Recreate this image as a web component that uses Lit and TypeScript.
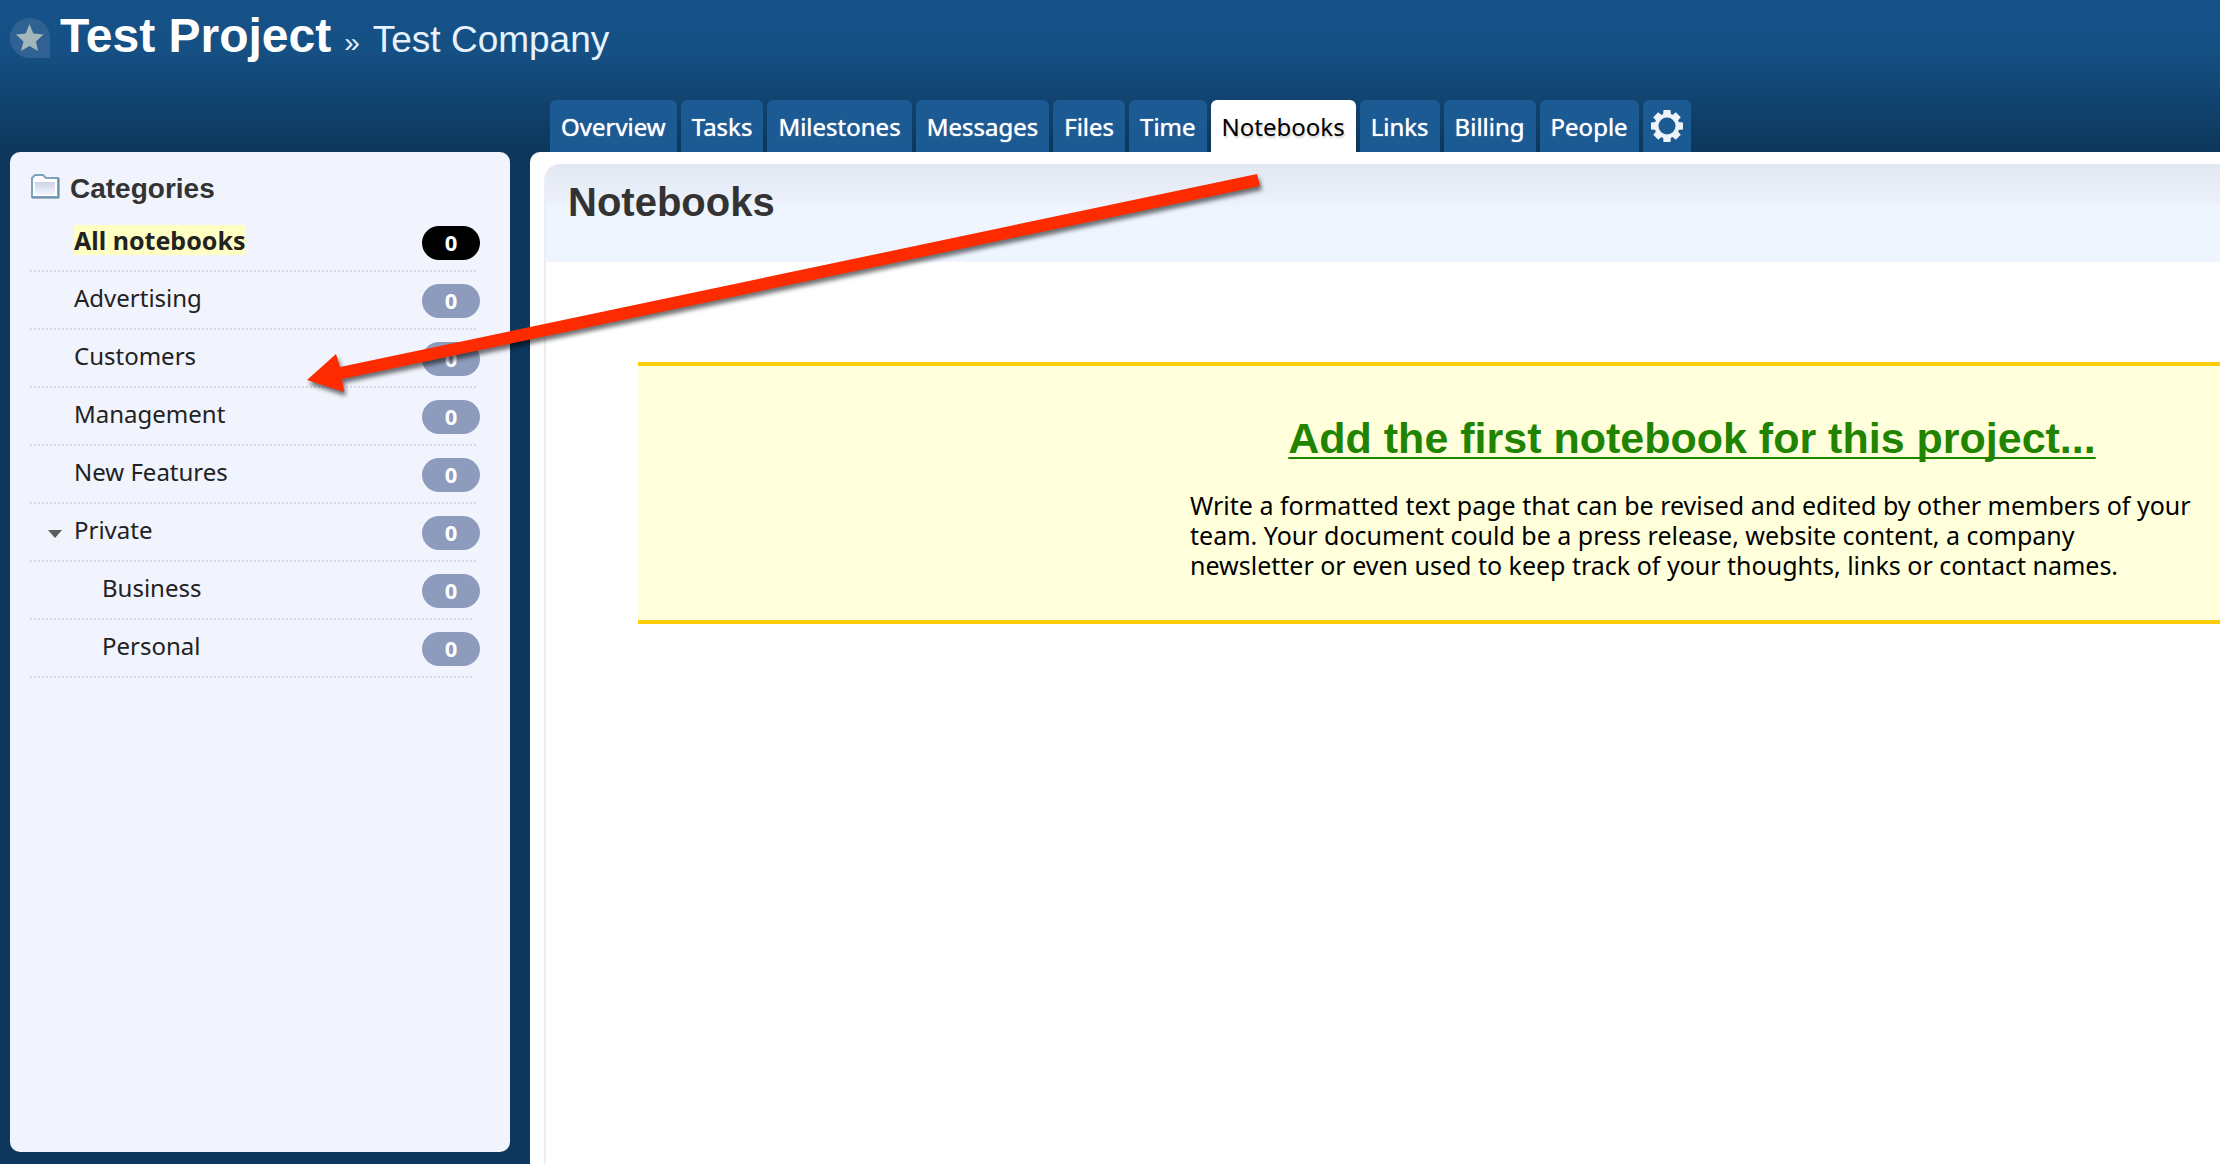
import { LitElement, html, css, svg, nothing } from "lit";
import { customElement, property } from "lit/decorators.js";
import { classMap } from "lit/directives/class-map.js";

interface Category {
  name: string;
  count: number;
  selected?: boolean;
  expanded?: boolean;
  nested?: boolean;
}

const TABS = [
  "Overview",
  "Tasks",
  "Milestones",
  "Messages",
  "Files",
  "Time",
  "Notebooks",
  "Links",
  "Billing",
  "People",
];

const CATEGORIES: Category[] = [
  { name: "All notebooks", count: 0, selected: true },
  { name: "Advertising", count: 0 },
  { name: "Customers", count: 0 },
  { name: "Management", count: 0 },
  { name: "New Features", count: 0 },
  { name: "Private", count: 0, expanded: true },
  { name: "Business", count: 0, nested: true },
  { name: "Personal", count: 0, nested: true },
];

@customElement("project-header")
class ProjectHeader extends LitElement {
  static styles = css`
    :host {
      display: block;
      color: #fff;
    }
    .title {
      display: flex;
      align-items: baseline;
      height: 100px;
      padding-left: 10px;
      box-sizing: border-box;
      font-family: "Liberation Sans", Arial, sans-serif;
    }
    .star {
      align-self: flex-start;
      width: 40px;
      height: 40px;
      margin: 18px 10px 0 0;
      padding: 0;
      border: 0;
      background: none;
    }
    .star svg {
      display: block;
    }
    h1 {
      margin: 8px 0 0;
      font-size: 48px;
      line-height: 56px;
    }
    .separator {
      margin: 0 13px;
      font-size: 28px;
      color: #e6f2ff;
    }
    .company {
      font-size: 37px;
      color: #e6f2ff;
      text-decoration: none;
    }
    .tabs {
      display: flex;
      gap: 4px;
      padding-left: 550px;
      font: 24px/54px "Noto Sans", "Open Sans", sans-serif;
    }
    .tab {
      height: 52px;
      padding: 0 11px;
      border-radius: 6px 6px 0 0;
      background: #1c5a94;
      color: #fff;
      text-decoration: none;
      text-shadow: 0 0 1px #fff;
    }
    .tab.current {
      background: #fff;
      color: #000;
      text-shadow: 1px 2px 2px #ccc;
    }
    .settings {
      display: flex;
      justify-content: center;
      width: 48px;
      padding: 10px 0 0;
      border: 0;
      box-sizing: border-box;
    }
  `;

  render() {
    return html`
      <div class="title">
        <button class="star" aria-label="Star project">
          <svg width="40" height="40" viewBox="0 0 40 40">
            <path d="M20 0A20 20 0 0 1 40 20V40H20A20 20 0 0 1 20 0Z" fill="#2f6292" />
            <path
              d="M19.500 6L23.300 15.500L33.500 16.500L26 23.500L28 33L19.500 28L11 33L13.500 23.500L6 16.500L15.700 15.500Z"
              fill="#a3b6bb"
            />
          </svg>
        </button>
        <h1>Test Project</h1>
        <span class="separator">»</span>
        <a class="company" href="#company">Test Company</a>
      </div>
      <nav class="tabs">
        ${TABS.map(
          (t) => html`<a
            class=${classMap({ tab: true, current: t === "Notebooks" })}
            href="#${t.toLowerCase()}"
            >${t}</a
          >`
        )}
        <button class="tab settings" aria-label="Settings">
          <svg width="32" height="32" viewBox="-16 -16 32 32" fill="#eef3f8">
            ${[0, 45, 90, 135, 180, 225, 270, 315].map(
              (a) => svg`<path d="M-4 -10L-3.500 -16H3.500L4 -10Z" transform="rotate(${a})" />`
            )}
            <circle r="10.500" fill="none" stroke="#eef3f8" stroke-width="4" />
          </svg>
        </button>
      </nav>
    `;
  }
}

@customElement("category-row")
class CategoryRow extends LitElement {
  static styles = css`
    :host {
      display: block;
    }
    .row {
      display: flex;
      align-items: flex-start;
      height: 58px;
      margin: 0 34px 0 20px;
      padding: 11px 0 0 44px;
      box-sizing: border-box;
      border-bottom: 2px dotted #d5d9e2;
      font: 24px/30px "Noto Sans", "Open Sans", sans-serif;
      color: #222;
    }
    .expanded {
      padding-left: 16px;
    }
    .nested {
      margin-right: 38px;
      padding-left: 72px;
    }
    .toggle {
      width: 28px;
      height: 34px;
      padding: 0;
      border: 0;
      background: none;
    }
    .toggle svg {
      display: block;
    }
    .name {
      color: inherit;
      text-decoration: none;
    }
    .selected .name {
      background: #ffffc4;
      font-size: 25px;
      font-weight: 700;
    }
    .count {
      width: 58px;
      margin: 1px -4px 0 auto;
      padding-bottom: 2px;
      border-radius: 17px;
      background: #8d9bbd;
      color: #fff;
      font-size: 22px;
      font-weight: 700;
      line-height: 32px;
      text-align: center;
    }
    .nested .count {
      margin-right: -8px;
    }
    .selected .count {
      background: #000;
    }
  `;

  @property({ attribute: false }) category!: Category;

  render() {
    const { name, count, selected, expanded, nested } = this.category;
    return html`
      <div
        class=${classMap({
          row: true,
          selected: !!selected,
          expanded: !!expanded,
          nested: !!nested,
        })}
      >
        ${expanded
          ? html`<button class="toggle" aria-label="Collapse ${name}">
              <svg width="16" height="34" viewBox="0 0 16 34">
                <path d="M2 15H16L9 23Z" fill="#5c5c5c" />
              </svg>
            </button>`
          : nothing}
        <a class="name" href="#category">${name}</a>
        <span class="count">${count}</span>
      </div>
    `;
  }
}

@customElement("category-panel")
class CategoryPanel extends LitElement {
  static styles = css`
    :host {
      display: block;
      border-radius: 10px;
      background: #f1f3fd;
    }
    .heading {
      display: flex;
      align-items: center;
      gap: 10px;
      height: 62px;
      padding: 12px 20px 0;
      box-sizing: border-box;
    }
    .heading svg {
      margin-bottom: 6px;
    }
    h2 {
      margin: 0;
      font: bold 28px/32px "Liberation Sans", Arial, sans-serif;
      color: #333;
    }
  `;

  render() {
    return html`
      <div class="heading">
        <svg width="30" height="26" viewBox="0 0 30 26">
          <defs>
            <linearGradient id="folder" x2="0" y2="1">
              <stop offset="0" stop-color="#ccd3e6" />
              <stop offset="1" stop-color="#f4f7fd" />
            </linearGradient>
          </defs>
          <path
            d="M2 24V5L5 2H13L16 5H28V24Z"
            fill="#fff"
            stroke="#7fa3bd"
            stroke-width="2"
          />
          <path d="M2 25H29V5" fill="none" stroke="#5c8099" stroke-width="1" />
          <rect x="5" y="9" width="20" height="13" fill="url(#folder)" />
        </svg>
        <h2>Categories</h2>
      </div>
      ${CATEGORIES.map((c) => html`<category-row .category=${c}></category-row>`)}
    `;
  }
}

@customElement("notebooks-page")
class NotebooksPage extends LitElement {
  static styles = css`
    :host {
      display: block;
      padding: 12px 0 0 14px;
      border-radius: 10px 0 0 0;
      background: #fff;
      box-sizing: border-box;
    }
    .frame {
      height: 100%;
      border-left: 2px solid #eee;
      border-radius: 16px 0 0 0;
      box-sizing: border-box;
    }
    .bar {
      height: 98px;
      padding: 14px 22px;
      box-sizing: border-box;
      border-radius: 14px 0 0 0;
      background: linear-gradient(#e2e8f2, #ecf1fc 41px, #eef5ff 42px);
    }
    h2 {
      margin: 0;
      font: bold 40px/48px "Liberation Sans", Arial, sans-serif;
      color: #333;
    }
    .empty {
      display: flex;
      justify-content: flex-end;
      margin: 100px 0 0 92px;
      padding: 44px 26px 40px;
      border: solid #fccd0a;
      border-width: 4px 0;
      background: #ffffdb;
    }
    .message {
      width: 1004px;
    }
    .add {
      display: block;
      font: bold 43px/56px "Liberation Sans", Arial, sans-serif;
      color: #218400;
      text-align: center;
      text-decoration-thickness: 2px;
      text-underline-offset: 4px;
      text-decoration-skip-ink: none;
    }
    p {
      margin: 24px 0 0;
      font: 25px/30px "Noto Sans", "Open Sans", sans-serif;
      color: #000;
    }
  `;

  render() {
    return html`
      <div class="frame">
        <div class="bar"><h2>Notebooks</h2></div>
        <section class="empty">
          <div class="message">
            <a class="add" href="#add">Add the first notebook for this project...</a>
            <p>
              Write a formatted text page that can be revised and edited by other members of your
              team. Your document could be a press release, website content, a company newsletter
              or even used to keep track of your thoughts, links or contact names.
            </p>
          </div>
        </section>
      </div>
    `;
  }
}

@customElement("app-root")
class AppRoot extends LitElement {
  static styles = css`
    :host {
      position: relative;
      display: flex;
      flex-direction: column;
      min-height: 100vh;
      overflow: hidden;
      background: linear-gradient(#155289, #155084 50px, #0d375c 150px);
    }
    .body {
      display: grid;
      flex: 1;
      grid-template-columns: 500px minmax(0, 1fr);
      gap: 20px;
      padding-left: 10px;
    }
    .side {
      margin-bottom: 12px;
    }
    .arrow {
      position: absolute;
      left: 300px;
      top: 160px;
      pointer-events: none;
      filter: drop-shadow(2px 4px 2px rgba(0, 0, 0, 0.55));
    }
  `;

  render() {
    return html`
      <project-header></project-header>
      <div class="body">
        <category-panel class="side"></category-panel>
        <notebooks-page></notebooks-page>
      </div>
      <svg class="arrow" width="980" height="250" viewBox="300 160 980 250">
        <path d="M307 380L336 354L340 367L1257 174L1260 186L342 379L344 392Z" fill="#fe2b00" />
      </svg>
    `;
  }
}
